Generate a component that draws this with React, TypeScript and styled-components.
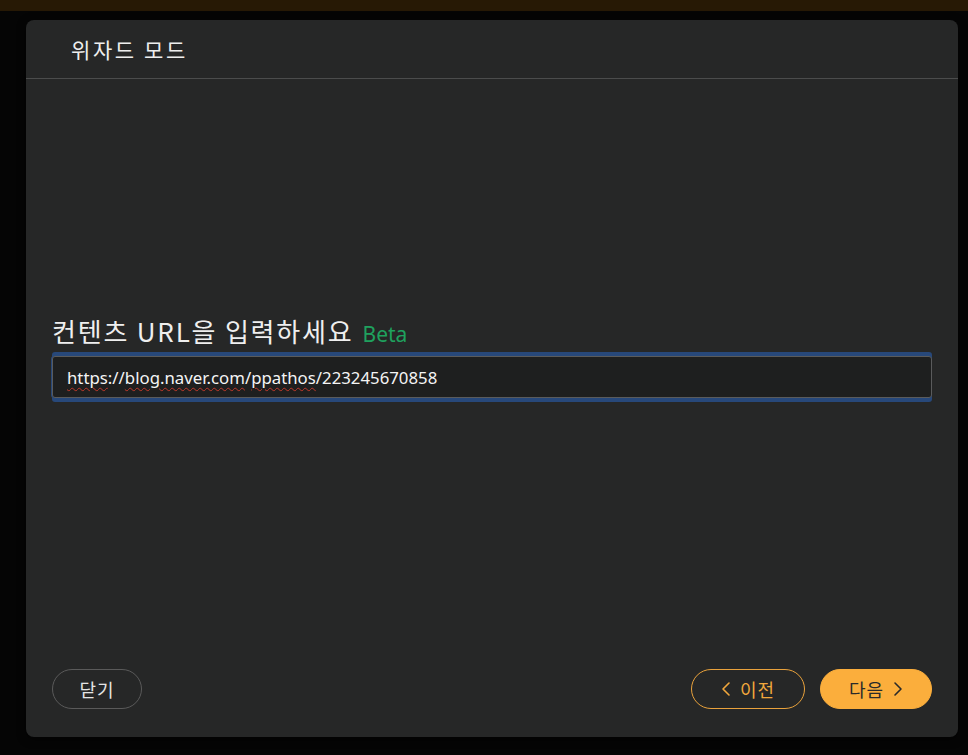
import { createGlobalStyle } from "styled-components";
import styled from "styled-components";

const Global = createGlobalStyle`
html, body {
    margin: 0;
    padding: 0;
    background: #050505;
    font-family: "Noto Sans", "Noto Sans CJK KR", sans-serif;
}
`;

const Screen = styled.div`
width: 968px;
height: 755px;
display: flex;
flex-direction: column;
overflow: hidden;
`;

const TopBar = styled.div`
height: 11px;
background: #271905;
flex-shrink: 0;
`;

const Stage = styled.div`
flex: 1;
padding: 9px 10px 0 26px;
`;

const Modal = styled.div`
width: 932px;
height: 717px;
background: #262727;
border-radius: 8px;
display: flex;
flex-direction: column;
box-shadow: 0 2px 8px rgba(0,0,0,.6);
`;

const Header = styled.div`
height: 58px;
display: flex;
align-items: center;
padding: 0 45px;
border-bottom: 1px solid #4b4c4c;
color: #eeeeee;
font-family: "Noto Sans CJK KR", sans-serif;
font-size: 21px;
letter-spacing: 2.6px;
`;

const Body = styled.div`
flex: 1;
display: flex;
flex-direction: column;
padding: 234px 26px 28px;
`;

const Label = styled.div`
display: flex;
align-items: baseline;
gap: 9px;
color: #efefef;
font-family: "Noto Sans CJK KR", sans-serif;
font-size: 26px;
letter-spacing: 1.8px;
line-height: 36px;
`;

const Beta = styled.span`
color: #1fa15e;
font-family: "Noto Sans", sans-serif;
font-size: 21px;
letter-spacing: 0;
`;

const Field = styled.div`
margin-top: 4px;
height: 40px;
display: flex;
align-items: center;
padding: 0 14px;
background: #1e1f1f;
border: 1px solid #5a5b5c;
border-radius: 3px;
box-shadow: 0 -4px 0 #27487a, 0 4px 0 #27487a, -1px 0 0 #27487a;
color: #f4f4f4;
font-size: 16.8px;
`;

const Typo = styled.span`
text-decoration: underline wavy #c0392b;
text-decoration-thickness: 1px;
text-underline-offset: 3px;
`;

const Spacer = styled.div`
flex: 1;
`;

const Footer = styled.div`
display: flex;
align-items: center;
gap: 15px;
`;

const Btn = styled.button<{ $kind: "ghost" | "outline" | "fill" }>`
height: 40px;
border-radius: 20px;
display: flex;
align-items: center;
justify-content: center;
gap: 9px;
font-family: "Noto Sans CJK KR", sans-serif;
font-size: 18px;
letter-spacing: 1px;
cursor: pointer;
padding: 0;
background: ${p => p.$kind === "fill" ? "#fbae3c" : "transparent"};
color: ${p => p.$kind === "ghost" ? "#e4e4e4" : p.$kind === "outline" ? "#f1a73c" : "#2a2a2a"};
border: 1px solid ${p => p.$kind === "ghost" ? "#5a5a5a" : p.$kind === "outline" ? "#e9a23c" : "#fbae3c"};
`;

const Chevron = ({ dir }: { dir: "left" | "right" }) => (
    <svg width="10" height="16" viewBox="0 0 10 16" fill="none">
        <path
            d={dir === "left" ? "M8 2 L2 8 L8 14" : "M2 2 L8 8 L2 14"}
            stroke="currentColor"
            strokeWidth="1.6"
            strokeLinecap="round"
            strokeLinejoin="round"
        />
    </svg>
);

export default function App() {
    return <Screen>
        <Global />
        <TopBar />
        <Stage>
            <Modal>
                <Header>위자드 모드</Header>
                <Body>
                    <Label>컨텐츠 URL을 입력하세요<Beta>Beta</Beta></Label>
                    <Field>
                        <span><Typo>https</Typo>://<Typo>blog.naver.com</Typo>/<Typo>ppathos</Typo>/223245670858</span>
                    </Field>
                    <Spacer />
                    <Footer>
                        <Btn $kind="ghost" style={{ width: 90 }}>닫기</Btn>
                        <Spacer />
                        <Btn $kind="outline" style={{ width: 114 }}><Chevron dir="left" />이전</Btn>
                        <Btn $kind="fill" style={{ width: 112 }}>다음<Chevron dir="right" /></Btn>
                    </Footer>
                </Body>
            </Modal>
        </Stage>
    </Screen>;
}
